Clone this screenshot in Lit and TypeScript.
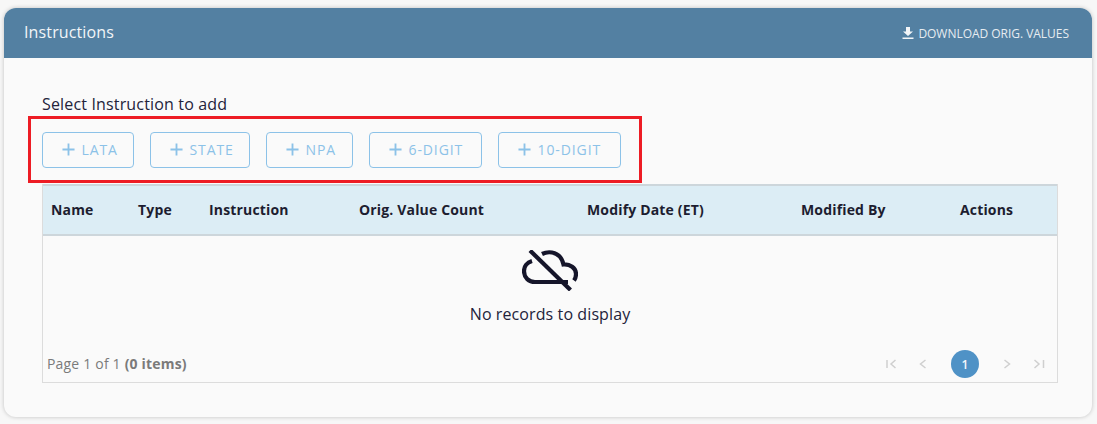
import { LitElement, html, css } from "lit";
import { customElement } from "lit/decorators.js";

const plus = html`<svg class="plus" viewBox="0 0 14 14"><path d="M7 .5v13M.5 7h13" /></svg>`;

@customElement("app-root")
export class AppRoot extends LitElement {
  static styles = css`
    :host {
      display: block;
      width: 1097px;
      height: 424px;
      box-sizing: border-box;
      padding: 8px 5px 7px 4px;
      background: #f7f7f7;
      font-family: "Open Sans", sans-serif;
      color: #23233a;
      position: relative;
      overflow: hidden;
    }
    .card {
      height: 100%;
      box-sizing: border-box;
      background: #fafafa;
      border-radius: 12px;
      box-shadow: 0 0 4px rgba(0, 0, 0, 0.22);
      display: flex;
      flex-direction: column;
      overflow: hidden;
    }
    .head {
      flex: 0 0 50px;
      box-sizing: border-box;
      background: #5380a2;
      color: #f2f5f8;
      display: flex;
      align-items: center;
      justify-content: space-between;
      padding: 0 23px 2px 20px;
    }
    .title {
      font-size: 16px;
      line-height: 22px;
      letter-spacing: 0.13px;
    }
    .dl {
      display: flex;
      align-items: center;
      gap: 4px;
      padding-top: 2px;
      font-size: 12px;
      letter-spacing: -0.03px;
      color: #e6ecf1;
    }
    .dl svg {
      width: 12px;
      height: 12px;
      fill: #f2f5f8;
    }
    .body {
      padding: 37px 34px 0 38px;
      flex: 1;
    }
    .label {
      font-size: 16px;
      line-height: 18px;
      letter-spacing: 0.16px;
    }
    .btns {
      display: flex;
      gap: 16px;
      margin-top: 19px;
    }
    .btn {
      height: 36px;
      box-sizing: border-box;
      border: 1px solid #8cc2e8;
      border-radius: 4px;
      background: transparent;
      color: #8cc2e8;
      font-family: inherit;
      font-size: 14px;
      letter-spacing: 0.9px;
      display: flex;
      align-items: center;
      gap: 6.5px;
      padding: 0 0 2px 19px;
    }
    .plus {
      width: 13px;
      height: 13px;
      fill: none;
      stroke: #8cc2e8;
      stroke-width: 2;
    }
    .table {
      margin-top: 16px;
      height: 199px;
      box-sizing: border-box;
      border: 1px solid #dcdcdc;
      border-top: 0;
      display: flex;
      flex-direction: column;
    }
    .thead {
      flex: 0 0 52px;
      box-sizing: border-box;
      background: #dcedf5;
      border-top: 2px solid #cdd6db;
      border-bottom: 2px solid #cdd6db;
      display: grid;
      grid-template-columns: 87px 71px 150px 228px 214px 159px 1fr;
      align-items: center;
      padding: 0 0 2px 8px;
      font-size: 14px;
      font-weight: 700;
      letter-spacing: 0.16px;
      color: #1d1d30;
    }
    .empty {
      display: flex;
      flex-direction: column;
      align-items: center;
      padding-top: 14px;
    }
    .cloud {
      width: 56px;
      height: 41px;
      fill: none;
      stroke: #15152a;
      stroke-width: 4.2;
    }
    .msg {
      font-size: 16px;
      line-height: 22px;
      margin-top: 12px;
      letter-spacing: 0.1px;
    }
    .foot {
      margin-top: auto;
      height: 38px;
      display: flex;
      align-items: center;
      justify-content: space-between;
      padding: 0 11px 0 4px;
    }
    .info {
      font-size: 14px;
      letter-spacing: 0.19px;
      color: #7a7a7a;
    }
    .pager {
      display: flex;
      align-items: center;
      padding-top: 2px;
    }
    .nav {
      width: 12px;
      height: 12px;
      fill: none;
      stroke: #cfcfcf;
      stroke-width: 1.5;
    }
    .nav.a { margin-right: 21px; }
    .nav.b { margin-right: 22px; }
    .nav.c { margin-left: 22px; }
    .nav.d { margin-left: 21px; }
    .cur {
      width: 28px;
      height: 28px;
      border-radius: 50%;
      background: #4f92c6;
      color: #f4f8fb;
      font-size: 12px;
      font-weight: 600;
      display: flex;
      align-items: center;
      justify-content: center;
    }
    .mark {
      position: absolute;
      left: 28px;
      top: 116px;
      width: 614px;
      height: 67px;
      box-sizing: border-box;
      border: 3px solid #ed1c24;
      pointer-events: none;
    }
  `;

  render() {
    const btns: [string, number][] = [
      ["LATA", 92],
      ["STATE", 100],
      ["NPA", 87],
      ["6-DIGIT", 113],
      ["10-DIGIT", 123],
    ];
    const cols = ["Name", "Type", "Instruction", "Orig. Value Count", "Modify Date (ET)", "Modified By", "Actions"];
    return html`
      <div class="card">
        <div class="head">
          <div class="title">Instructions</div>
          <div class="dl">
            <svg viewBox="0 0 12 12"><path d="M4 0h4v4.500h3L6 9 1 4.500h3zM.5 10.400h11V12H.5z" /></svg>
            DOWNLOAD ORIG. VALUES
          </div>
        </div>
        <div class="body">
          <div class="label">Select Instruction to add</div>
          <div class="btns">
            ${btns.map(([t, w]) => html`<button class="btn" style="width:${w}px">${plus}${t}</button>`)}
          </div>
          <div class="table">
            <div class="thead">${cols.map((c) => html`<div>${c}</div>`)}</div>
            <div class="empty">
              <svg class="cloud" viewBox="0 0 56 41">
                <path d="M10 11C5 12.500 2 16.500 2 21c0 7 5 11 11 11h33" />
                <path d="M20 4c3-1.500 7-2 10-1.500 6 1 10 5.500 11.500 12C48 14 54 18 54 24c0 2.500-.5 4.500-2 6.500" />
                <path d="M8 .5 48.500 40" />
              </svg>
              <div class="msg">No records to display</div>
            </div>
            <div class="foot">
              <div class="info">Page 1 of 1 <b>(0 items)</b></div>
              <div class="pager">
                <svg class="nav a" viewBox="0 0 12 12"><path d="M3 2v8M11.500 2 7 6l4.500 4" /></svg>
                <svg class="nav b" viewBox="0 0 12 12"><path d="M8.500 2 3.500 6l5 4" /></svg>
                <div class="cur">1</div>
                <svg class="nav c" viewBox="0 0 12 12"><path d="M3.500 2 8.500 6l-5 4" /></svg>
                <svg class="nav d" viewBox="0 0 12 12"><path d="M.5 2 5 6l-4.500 4M9.500 2v8" /></svg>
              </div>
            </div>
          </div>
        </div>
      </div>
      <div class="mark"></div>
    `;
  }
}
